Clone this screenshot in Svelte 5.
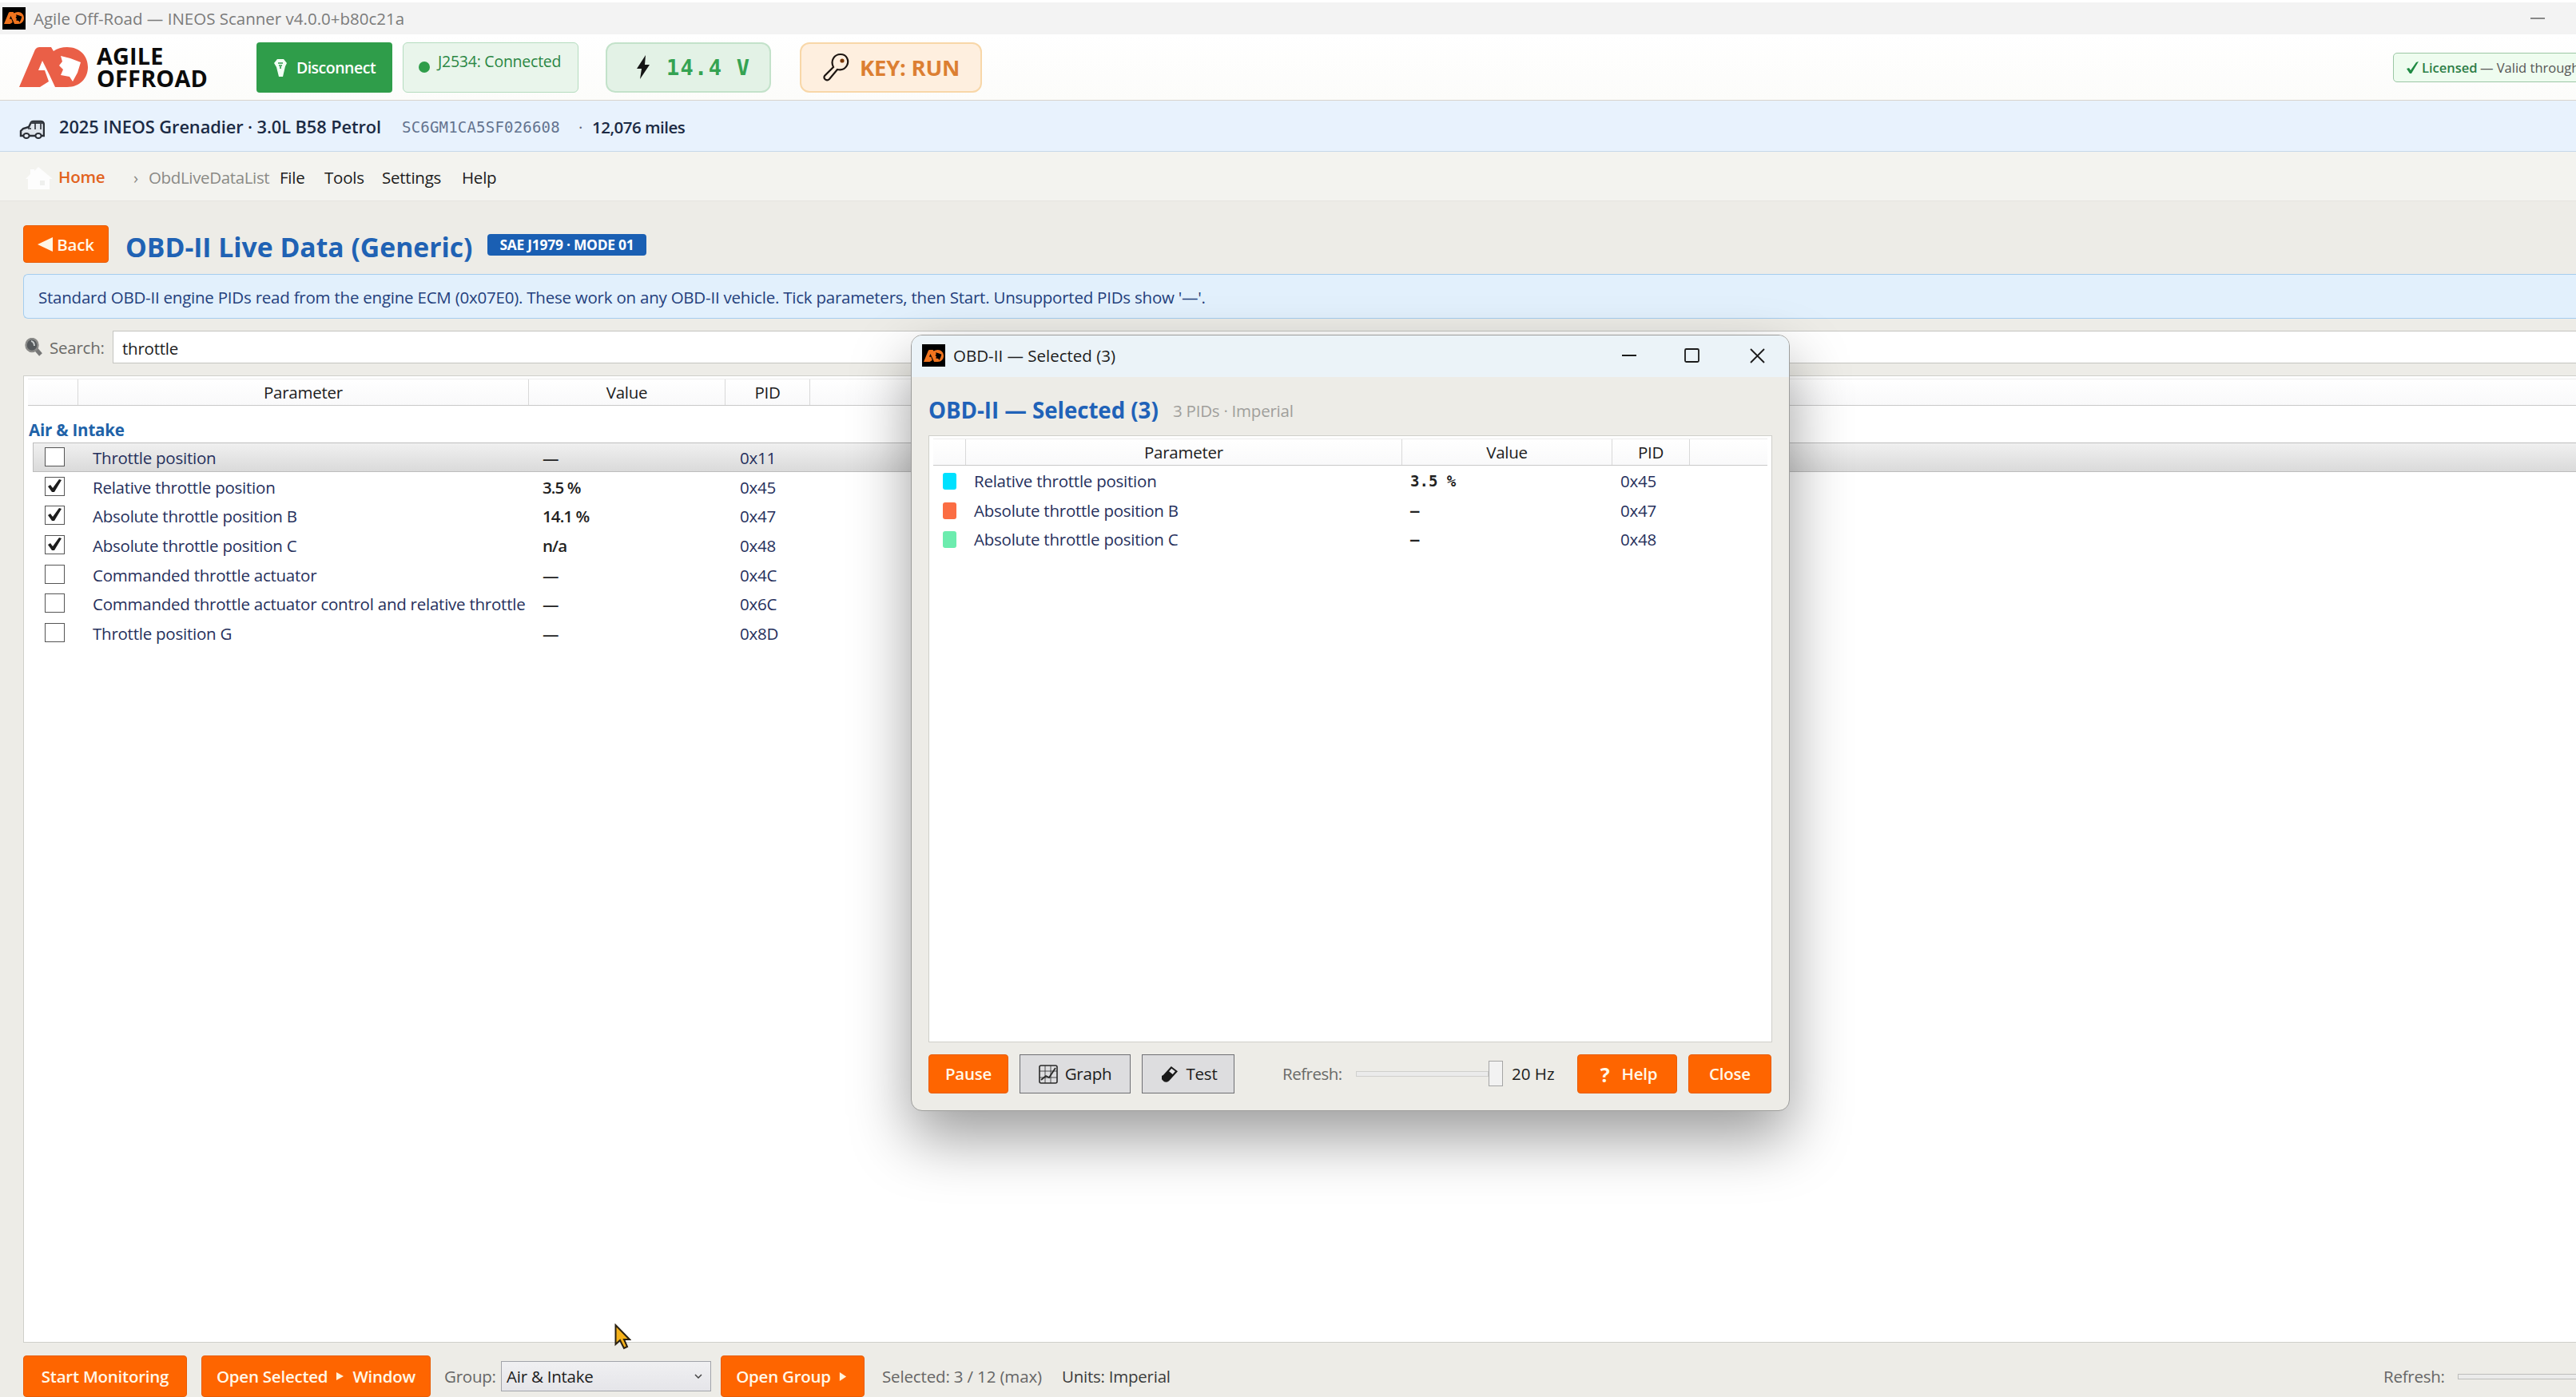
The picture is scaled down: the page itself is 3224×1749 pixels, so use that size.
<script lang="ts">
  let search = $state('throttle');
  let selectedPid = $state('0x11');

  let params = $state([
    { name: 'Throttle position', value: '—', pid: '0x11', checked: false },
    { name: 'Relative throttle position', value: '3.5 %', pid: '0x45', checked: true },
    { name: 'Absolute throttle position B', value: '14.1 %', pid: '0x47', checked: true },
    { name: 'Absolute throttle position C', value: 'n/a', pid: '0x48', checked: true },
    { name: 'Commanded throttle actuator', value: '—', pid: '0x4C', checked: false },
    { name: 'Commanded throttle actuator control and relative throttle', value: '—', pid: '0x6C', checked: false },
    { name: 'Throttle position G', value: '—', pid: '0x8D', checked: false }
  ]);

  const live = [
    { name: 'Relative throttle position', value: '3.5 %', pid: '0x45', color: '#00e1ff' },
    { name: 'Absolute throttle position B', value: '–', pid: '0x47', color: '#fb6d43' },
    { name: 'Absolute throttle position C', value: '–', pid: '0x48', color: '#6cecae' }
  ];

  function toggle(row) {
    row.checked = !row.checked;
    selectedPid = row.pid;
  }
</script>

{#snippet mark(cls, fg, bg)}
  <svg class={cls} viewBox="0 0 86 50" preserveAspectRatio="none">
    <path fill={fg} d="M0 50 20 3Q22 0 25 0H40L43 5Q50 0 60 0C76 0 86 11 86 25S76 50 60 50Z" />
    <path fill={bg} d="M29 17 24 29 32 29 37 43 26 50H45L38 35Z" />
    <path fill={bg} d="M52 11 64 14 77 19 73 32 67 43 63 37 52 35 55 28 50 23 54 18Z" />
  </svg>
{/snippet}

<div class="app">
  <div class="titlebar">
    <span class="appicon">{@render mark('mini', '#f0741e', '#000')}</span>
    <span class="apptitle">Agile Off-Road — INEOS Scanner v4.0.0+b80c21a</span>
    <span class="winmin"></span>
  </div>

  <header class="header">
    {@render mark('logo', '#ea5f47', '#fff')}
    <div class="brand"><span class="b1">AGILE</span><span class="b2">OFFROAD</span></div>
    <button class="disconnect">
      <svg width="16" height="22" viewBox="0 0 16 22"><path fill="#f2fff5" d="M4 0h8l4 5-2 4-3 13H6L3 10 0 5Z" /><path d="M5 5h6M6 8h4M8 9v3" stroke="#2c9a49" stroke-width="1.6" /></svg>
      <span>Disconnect</span>
    </button>
    <div class="conn"><i></i><span>J2534: Connected</span></div>
    <div class="volt">
      <svg width="18" height="30" viewBox="0 0 18 30"><path fill="#151515" d="M12 0 1 17h6L5 30 17 12h-6Z" /></svg>
      <span>14.4 V</span>
    </div>
    <div class="key">
      <svg width="34" height="36" viewBox="0 0 34 36" fill="none" stroke="#1d1612" stroke-width="2.2"><path d="M14 18C10 10 15 2 23 2s11 8 8 14c-3 5-8 6-12 5L9 33c-3 3-8 0-6-4Z" /><circle cx="25" cy="10" r="1.5" fill="#7a3a08" stroke="#7a3a08" /></svg>
      <span>KEY: RUN</span>
    </div>
    <div class="license">
      <svg width="16" height="16" viewBox="0 0 16 16"><path fill="#1f8a43" d="M0 9 3 8 5 11 12 1 15 0 6 15H4Z" /></svg>
      <b>Licensed</b><span>— Valid through</span>
    </div>
  </header>

  <div class="vehicle">
    <svg width="32" height="24" viewBox="0 0 32 24"><path fill="#dfe5ec" stroke="#2b2f36" stroke-width="2.4" d="M2 20v-6l3-3 7-2 3-6q1-1 3-1h9q4 0 4 5v13Z" /><path fill="#3a3f46" d="M15 2h13l2 3H14Z" /><path stroke="#2b2f36" stroke-width="1.6" d="M11 11h4M20 4v8M27 5v7" /><ellipse cx="9" cy="20" rx="3.6" ry="3" fill="#e8eef6" stroke="#2b2f36" stroke-width="2" /><ellipse cx="24" cy="20" rx="3.6" ry="3" fill="#e8eef6" stroke="#2b2f36" stroke-width="2" /></svg>
    <span class="model">2025 INEOS Grenadier · 3.0L B58 Petrol</span>
    <span class="vin">SC6GM1CA5SF026608</span>
    <span class="dot">·</span>
    <span class="miles">12,076 miles</span>
  </div>

  <nav class="menubar">
    <svg width="34" height="28" viewBox="0 0 34 28"><path fill="#fdfdfd" d="M0 15 6 9V3h5v2l5-5 18 15h-4v13H3V15Z" /><path fill="#eff0ee" d="M18 17h6v6h-6Z" /></svg>
    <span class="home">Home</span>
    <span class="sep">›</span>
    <span class="crumb">ObdLiveDataList</span>
    <span class="m1">File</span>
    <span class="m2">Tools</span>
    <span class="m3">Settings</span>
    <span class="m4">Help</span>
  </nav>

  <main class="content">
    <div class="heading">
      <button class="btn back"><svg width="19" height="18" viewBox="0 0 19 18"><path fill="#fff6e4" d="M0 9 19 0V18Z" /></svg><span>Back</span></button>
      <h1>OBD-II Live Data (Generic)</h1>
      <span class="mode"><span>SAE J1979 · MODE 01</span></span>
    </div>

    <div class="info"><span>Standard OBD-II engine PIDs read from the engine ECM (0x07E0). These work on any OBD-II vehicle. Tick parameters, then Start. Unsupported PIDs show '—'.</span></div>

    <div class="search">
      <svg width="22" height="23" viewBox="0 0 22 23"><path d="M13 13 20 21" stroke="#777" stroke-width="5" /><ellipse cx="9" cy="9" rx="7.5" ry="8" fill="#55595c" stroke="#8a8a88" stroke-width="2.4" /><path d="M8 4q4 1 4 6" stroke="#c8cccc" stroke-width="2" fill="none" /></svg>
      <span class="label">Search:</span>
      <input type="text" bind:value={search} />
    </div>

    <div class="table">
      <div class="thead">
        <span></span><span>Parameter</span><span>Value</span><span>PID</span><span></span>
      </div>
      <div class="group">Air &amp; Intake</div>
      {#each params as row}
        <div class="row" class:selected={row.pid === selectedPid}>
          <button class="check" aria-label={row.name} onclick={() => toggle(row)}>
            {#if row.checked}
              <svg width="17" height="18" viewBox="0 0 17 18"><path fill="#1c1c1c" d="M0 9 3 7 6 11 14 0 17 1 8 16H5Z" /></svg>
            {/if}
          </button>
          <span class="name">{row.name}</span>
          <span class="value">{row.value}</span>
          <span class="pid">{row.pid}</span>
        </div>
      {/each}
    </div>
  </main>

  <footer class="footer">
    <button class="btn start"><span>Start Monitoring</span></button>
    <button class="btn opensel"><span>Open Selected</span><svg width="9" height="12" viewBox="0 0 9 12"><path fill="#fff3dc" d="M0 1 9 6 0 11Z" /></svg><span>Window</span></button>
    <span class="glabel">Group:</span>
    <div class="select"><span>Air &amp; Intake</span><svg width="10" height="6" viewBox="0 0 10 6"><path d="M1 1 5 5 9 1" fill="none" stroke="#444" stroke-width="1.5" /></svg></div>
    <button class="btn opengroup"><span>Open Group</span><svg width="10" height="11" viewBox="0 0 9 12"><path fill="#fff3dc" d="M0 0 9 6 0 12Z" /></svg></button>
    <span class="count">Selected: 3 / 12 (max)</span>
    <span class="units">Units: Imperial</span>
    <span class="flabel">Refresh:</span>
    <div class="track long"></div>
  </footer>

  <section class="dialog">
    <div class="dtitle">
      <span class="appicon">{@render mark('mini', '#f0741e', '#000')}</span>
      <span class="dname">OBD-II — Selected (3)</span>
      <svg width="179" height="20" viewBox="0 0 179 20" fill="none" stroke="#1b1b1b" stroke-width="1.8"><path d="M0 10h18M161 2l17 17M178 2l-17 17" /><rect x="79" y="2" width="17" height="16" rx="1.5" /></svg>
    </div>
    <div class="dhead"><h2>OBD-II — Selected (3)</h2><span>3 PIDs · Imperial</span></div>
    <div class="dtable">
      <div class="thead">
        <span></span><span>Parameter</span><span>Value</span><span>PID</span><span></span>
      </div>
      {#each live as row}
        <div class="drow">
          <i style="background: {row.color}"></i>
          <span class="name">{row.name}</span>
          <span class="mono">{row.value}</span>
          <span class="pid">{row.pid}</span>
        </div>
      {/each}
    </div>
    <div class="dfoot">
      <button class="btn pause"><span>Pause</span></button>
      <button class="gray graph">
        <svg width="24" height="24" viewBox="0 0 24 24" fill="none" stroke="#2a2a2a"><rect x="1" y="1" width="22" height="22" rx="2" stroke-width="1.6" /><path stroke-width=".8" d="M8 1v22M15 1v22M1 8h22M1 16h22" /><path stroke-width="1.8" d="M3 19 9 14l4 2L21 4" /></svg>
        <span>Graph</span>
      </button>
      <button class="gray test">
        <svg width="20" height="22" viewBox="0 0 22 22"><path fill="#1a1a1a" d="M13 0 22 7 10 20Q5 24 1 19T2 12Z" /><path fill="#e4e4e6" d="M13.5 3 18.5 7 15 11 10 7Z" /></svg>
        <span>Test</span>
      </button>
      <span class="dlabel">Refresh:</span>
      <div class="track"></div><div class="thumb"></div>
      <span class="hz">20 Hz</span>
      <button class="btn help"><span class="q">?</span><span>Help</span></button>
      <button class="btn close"><span>Close</span></button>
    </div>
  </section>

  <svg class="cursor" width="21" height="33" viewBox="0 0 21 33"><path fill="#f5b21c" stroke="#2a2112" stroke-width="2" d="M1.5 2V26L7 21l5 10 4-2-4-9h7Z" /></svg>
</div>

<style>
  :global(body) {
    overflow: hidden;
  }

  .app {
    position: relative;
    width: 3224px;
    height: 1749px;
    overflow: hidden;
    display: flex;
    flex-direction: column;
    background: #edece7;
    border-top: 3px solid #fff;
    box-sizing: border-box;
    font-family: 'Open Sans', 'Noto Sans', sans-serif;
    font-size: 20.5px;
    letter-spacing: -0.24px;
    line-height: 1.2;
    color: #1c1c1c;
    white-space: nowrap;
  }

  .app * {
    box-sizing: border-box;
  }

  button {
    font: inherit;
    letter-spacing: inherit;
    padding: 0;
    margin: 0;
    border: none;
    display: flex;
    align-items: center;
    justify-content: center;
  }

  svg {
    flex: none;
    display: block;
  }

  span {
    flex: none;
  }

  /* title bar */
  .titlebar {
    height: 40px;
    background: #f3f3f3;
    display: flex;
    align-items: center;
    padding-left: 3px;
    letter-spacing: 0;
  }

  .appicon {
    width: 29px;
    height: 28px;
    background: #000;
    display: flex;
    align-items: center;
    justify-content: center;
  }

  :global(.mini) {
    width: 25px;
    height: 15px;
  }

  .apptitle {
    margin-left: 10px;
    width: 3125px;
    color: #7b7b7b;
  }

  .winmin {
    width: 18px;
    height: 2px;
    background: #888;
  }

  /* header */
  .header {
    height: 84px;
    background: linear-gradient(#fff, #fcfcfa);
    border-bottom: 1px solid #d9d3cc;
    display: flex;
    align-items: center;
    padding-left: 24px;
  }

  .header > * {
    flex: none;
  }

  :global(.logo) {
    width: 86px;
    height: 50px;
  }

  .brand {
    width: 211px;
    padding-left: 11px;
    display: flex;
    flex-direction: column;
    font-weight: 700;
    font-size: 28.8px;
    line-height: 28px;
    letter-spacing: 0.2px;
    color: #0b0b0b;
  }

  .disconnect {
    width: 170px;
    height: 63px;
    border-radius: 4px;
    background: #2f9d4a;
    color: #fff;
    font-size: 19.5px;
    font-weight: 600;
    letter-spacing: -0.5px;
    gap: 12px;
    padding: 2px 0 0 1px;
  }

  .conn {
    width: 220px;
    height: 63px;
    margin-left: 13px;
    border: 1px solid #b5dcbf;
    border-radius: 6px;
    background: #e9f5eb;
    color: #2b8744;
    font-size: 19.5px;
    letter-spacing: -0.24px;
    display: flex;
    align-items: center;
    padding-left: 19px;
    gap: 10px;
  }

  .conn i {
    width: 14px;
    height: 14px;
    border-radius: 50%;
    background: #2f9d4a;
  }

  .conn span {
    padding-bottom: 15px;
  }

  .volt,
  .key {
    height: 63px;
    border-radius: 12px;
    display: flex;
    align-items: center;
    font-weight: 700;
  }

  .volt {
    width: 207px;
    margin-left: 34px;
    padding-left: 36px;
    gap: 20px;
    border: 2px solid #c3e2ca;
    background: #e3f2e6;
    color: #35a352;
    font-family: 'DejaVu Sans Mono', monospace;
    font-size: 27px;
    letter-spacing: 1.3px;
  }

  .volt span {
    padding-top: 2px;
  }

  .key {
    width: 228px;
    margin-left: 36px;
    padding-left: 26px;
    gap: 13px;
    border: 2px solid #f8d7a8;
    background: #feefdf;
    color: #dc7f32;
    font-size: 27.5px;
  }

  .key span {
    padding-top: 1px;
  }

  .license {
    width: 400px;
    height: 37px;
    margin-left: 1766px;
    border: 1px solid #9cc7a5;
    border-radius: 5px;
    background: #eefcef;
    display: flex;
    align-items: center;
    padding: 2px 0 0 16px;
    font-size: 16.5px;
    letter-spacing: 0;
    color: #555;
  }

  .license b {
    width: 73px;
    margin-left: 3px;
    font-weight: 600;
    color: #2d7d46;
  }

  /* vehicle bar */
  .vehicle {
    height: 64px;
    background: #e8f2fd;
    border-bottom: 1px solid #c6d8ea;
    display: flex;
    align-items: center;
    padding: 3px 0 0 24px;
    color: #1b2a44;
  }

  .vehicle svg {
    margin-top: 5px;
  }

  .model {
    width: 429px;
    margin-left: 18px;
    font-weight: 600;
    font-size: 21.8px;
    letter-spacing: -0.08px;
  }

  .vin {
    width: 221px;
    font-family: 'DejaVu Sans Mono', monospace;
    font-size: 19px;
    letter-spacing: 0.2px;
    color: #64748f;
  }

  .dot {
    width: 17px;
    color: #667;
  }

  .miles {
    font-weight: 600;
    letter-spacing: -0.5px;
  }

  /* menu */
  .menubar {
    height: 62px;
    background: #f3f3ef;
    border-bottom: 1px solid #e6e5e0;
    display: flex;
    align-items: center;
    padding: 4px 0 0 32px;
  }

  .home {
    width: 94px;
    margin-left: 7px;
    font-weight: 600;
    color: #e2631f;
    padding-bottom: 3px;
  }

  .sep {
    width: 19px;
    color: #8a8a86;
  }

  .crumb {
    width: 164px;
    letter-spacing: -0.35px;
    color: #8a8a86;
  }

  .m1 { width: 56px; }
  .m2 { width: 72px; }
  .m3 { width: 100px; }

  /* content */
  .content {
    padding-left: 29px;
  }

  .btn {
    background: #fe6500;
    border: 1px solid #e85c04;
    border-radius: 4px;
    color: #fff8e8;
    font-weight: 600;
  }

  .heading {
    height: 48px;
    margin-top: 29px;
    display: flex;
    align-items: center;
  }

  .back {
    width: 107px;
    height: 47px;
    gap: 5px;
    padding-top: 2px;
  }

  h1 {
    width: 453px;
    margin: 7px 0 0 21px;
    font-size: 33.7px;
    font-weight: 700;
    line-height: 40px;
    letter-spacing: 0;
    color: #2062b4;
  }

  .mode {
    width: 199px;
    height: 27px;
    margin-top: 2px;
    border-radius: 4px;
    background: #1a5fb3;
    color: #fff;
    font-weight: 700;
    font-size: 17.4px;
    display: flex;
    align-items: center;
    justify-content: center;
  }

  .info {
    height: 56px;
    margin-top: 14px;
    border: 1px solid #a5cdee;
    border-right: none;
    border-radius: 6px 0 0 6px;
    background: #e2f0fc;
    color: #24407c;
    display: flex;
    align-items: center;
    padding: 3px 0 0 18px;
    letter-spacing: -0.225px;
  }

  .search {
    height: 41px;
    margin-top: 15px;
    padding-left: 2px;
    display: flex;
    align-items: center;
    color: #6a6a68;
  }

  .label {
    width: 79px;
    margin-left: 9px;
    padding-top: 2px;
  }

  .search input {
    flex: 1;
    height: 41px;
    border: 1px solid #c4c4c0;
    border-right: none;
    background: #fff;
    padding: 2px 0 0 11px;
    font: inherit;
    letter-spacing: inherit;
    color: #1c1c1c;
    outline: none;
  }

  .table {
    height: 1211px;
    margin-top: 15px;
    background: #fff;
    border: 1px solid #cfcfca;
    border-right: none;
    padding: 3px 0 0 5px;
  }

  .thead {
    height: 34px;
    display: grid;
    grid-template-columns: 63px 564px 246px 106px 1fr;
    border-top: 1px solid #ececec;
    border-bottom: 1px solid #c9c9c9;
    background: linear-gradient(#fff, #f9f9fa);
  }

  .thead span {
    display: flex;
    align-items: center;
    justify-content: center;
    border-right: 1px solid #d9d9d9;
  }

  .thead span:last-child {
    border-right: none;
  }

  .group {
    height: 46px;
    padding: 18px 0 0 1px;
    font-weight: 700;
    color: #2062a8;
    letter-spacing: -0.2px;
  }

  .row {
    height: 36.7px;
    margin-left: 6px;
    padding: 2px 0 0 14px;
    border: 1px solid transparent;
    display: flex;
    align-items: center;
    color: #26305c;
  }

  .row.selected {
    border-color: #bdbdbd;
    border-right: none;
    background: linear-gradient(#f0f0f0, #dadada);
  }

  .check {
    width: 25px;
    height: 24px;
    margin-bottom: 3px;
    border: 1.5px solid #555;
    background: #fff;
  }

  .name {
    width: 563px;
    margin-left: 35px;
  }

  .value {
    width: 247px;
    font-weight: 600;
    letter-spacing: -0.9px;
    color: #222;
  }

  /* footer */
  .footer {
    height: 68px;
    padding: 16px 0 0 29px;
    display: flex;
    align-items: center;
    color: #666;
  }

  .footer > * {
    flex: none;
  }

  .footer .btn {
    height: 52px;
  }

  .start { width: 205px; }

  .opensel {
    width: 287px;
    margin-left: 18px;
    gap: 11px;
  }

  .glabel {
    width: 71px;
    margin-left: 17px;
  }

  .select {
    width: 263px;
    height: 38px;
    border: 1px solid #a2a4aa;
    background: linear-gradient(#f0f0f2, #e5e5e9);
    color: #1c1c1c;
    display: flex;
    align-items: center;
    justify-content: space-between;
    padding: 0 10px 0 6px;
  }

  .opengroup {
    width: 180px;
    margin-left: 12px;
    padding-right: 3px;
    gap: 10px;
  }

  .count {
    width: 225px;
    margin-left: 22px;
    letter-spacing: -0.15px;
  }

  .units {
    width: 1654px;
    color: #3c3c3c;
  }

  .flabel {
    width: 93px;
  }

  .track {
    width: 166px;
    height: 7px;
    border: 1px solid #d0d0cd;
    background: #ebebeb;
  }

  .track.long {
    width: 300px;
    border-color: #bdbdbb;
  }

  /* floating window */
  .dialog {
    position: absolute;
    left: 1140px;
    top: 416px;
    width: 1100px;
    height: 972px;
    border: 1px solid #9d9d9b;
    border-radius: 14px;
    background: #edece7;
    box-shadow: 0 34px 74px rgba(0, 0, 0, 0.39);
  }

  .dtitle {
    height: 52px;
    border-radius: 13px 13px 0 0;
    background: #ebf3f8;
    display: flex;
    align-items: center;
    padding: 0 0 2px 13px;
  }

  .dname {
    width: 837px;
    margin-left: 10px;
    letter-spacing: 0;
  }

  .dhead {
    height: 73px;
    padding: 12px 0 0 21px;
    display: flex;
    align-items: center;
    color: #a09f9c;
  }

  h2 {
    width: 306px;
    margin: 0;
    font-size: 27.7px;
    font-weight: 700;
    line-height: 32px;
    letter-spacing: -0.05px;
    color: #2062b8;
    padding-bottom: 3px;
  }

  .dtable {
    width: 1056px;
    height: 760px;
    margin-left: 21px;
    padding: 3px 5px 0;
    border: 1px solid #cfcfca;
    background: #fff;
  }

  .dtable .thead {
    grid-template-columns: 41px 546px 263px 97px 1fr;
    margin-bottom: 1px;
  }

  .drow {
    height: 36.7px;
    padding-left: 12px;
    display: flex;
    align-items: center;
    color: #26305c;
  }

  .drow i {
    width: 17px;
    height: 21px;
    border-radius: 3px;
  }

  .drow .name {
    width: 546px;
    margin-left: 22px;
  }

  .mono {
    width: 263px;
    font-family: 'DejaVu Sans Mono', monospace;
    font-weight: 700;
    font-size: 19px;
    letter-spacing: 0;
    color: #222;
  }

  .dfoot {
    height: 50px;
    margin-top: 14px;
    padding-left: 21px;
    display: flex;
    align-items: center;
    color: #6a6a68;
  }

  .dfoot button {
    height: 49px;
    padding-top: 1px;
  }

  .pause { width: 100px; }

  .gray {
    border: 1px solid #6e6f73;
    background: #dddddf;
    color: #1c1c1c;
  }

  .graph {
    width: 139px;
    margin-left: 14px;
    gap: 9px;
  }

  .test {
    width: 116px;
    margin-left: 14px;
    gap: 11px;
  }

  .dfoot .test {
    padding-left: 3px;
  }

  .dlabel {
    width: 92px;
    margin-left: 60px;
    letter-spacing: -0.5px;
  }

  .thumb {
    width: 18px;
    height: 32px;
    border: 1px solid #a5a5a5;
    background: #f2f2f2;
  }

  .hz {
    width: 82px;
    margin-left: 11px;
    letter-spacing: 0;
    color: #1c1c1c;
  }

  .help {
    width: 125px;
    gap: 15px;
  }

  .dfoot .help {
    padding-left: 4px;
  }

  .q {
    font-size: 25px;
    font-weight: 700;
  }

  .close {
    width: 104px;
    margin-left: 14px;
  }

  .cursor {
    position: absolute;
    left: 769px;
    top: 1654px;
  }
</style>
